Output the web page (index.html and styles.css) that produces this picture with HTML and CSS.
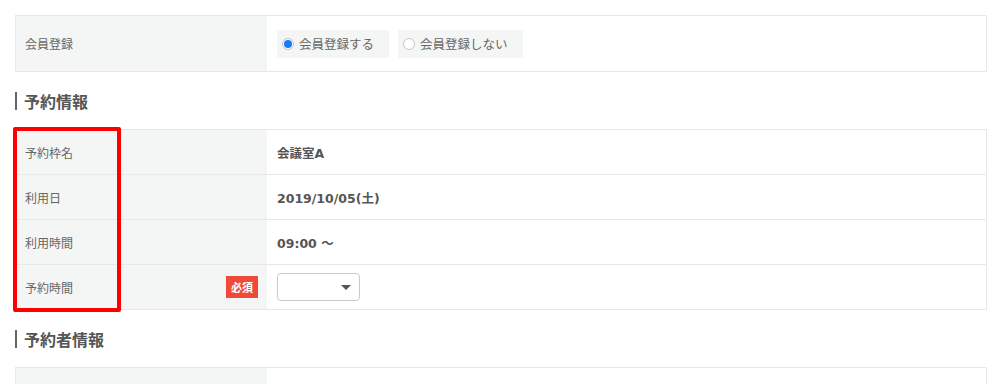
FILE: index.html
```html
<!DOCTYPE html>
<html lang="ja">
<head>
    <meta charset="UTF-8">
    <meta name="viewport" content="width=device-width, initial-scale=1.0">
    <title>予約フォーム</title>
    <link rel="stylesheet" href="styles.css">
</head>
<body>
    <div class="container">
        <div class="form-table">
            <div class="form-row tall">
                <div class="form-label">会員登録</div>
                <div class="form-value">
                    <label class="radio-pill">
                        <input type="radio" name="member" checked>
                        <span>会員登録する</span>
                    </label>
                    <label class="radio-pill">
                        <input type="radio" name="member">
                        <span>会員登録しない</span>
                    </label>
                </div>
            </div>
        </div>

        <h3 class="section-title">予約情報</h3>

        <div class="form-table">
            <div class="form-row">
                <div class="form-label">予約枠名</div>
                <div class="form-value strong">会議室A</div>
            </div>
            <div class="form-row">
                <div class="form-label">利用日</div>
                <div class="form-value strong">2019/10/05(土)</div>
            </div>
            <div class="form-row">
                <div class="form-label">利用時間</div>
                <div class="form-value strong">09:00 ～</div>
            </div>
            <div class="form-row">
                <div class="form-label">
                    予約時間
                    <span class="required">必須</span>
                </div>
                <div class="form-value">
                    <div class="select-box">
                        <select>
                            <option></option>
                        </select>
                        <span class="select-arrow"></span>
                    </div>
                </div>
            </div>
            <div class="highlight-box"></div>
        </div>

        <h3 class="section-title">予約者情報</h3>

        <div class="form-table">
            <div class="form-row">
                <div class="form-label">会員資格</div>
                <div class="form-value strong">ゲスト</div>
            </div>
        </div>
    </div>
</body>
</html>
```

FILE: styles.css
```css
body {
    margin: 0;
    background: #fff;
    font-family: "Noto Sans CJK JP", "Liberation Sans", sans-serif;
    color: #666;
}

.container {
    width: 972px;
    padding: 15px;
}

.form-table {
    position: relative;
    border: 1px solid #e8e8e8;
    border-bottom: none;
}

.form-row {
    display: grid;
    grid-template-columns: 251px 1fr;
    height: 44px;
    border-bottom: 1px solid #e8e8e8;
}

.form-row.tall {
    height: 55px;
}

.form-label {
    display: flex;
    align-items: center;
    justify-content: space-between;
    padding: 0 9px;
    background: #f4f5f5;
    font-size: 12px;
    color: #666;
}

.form-value {
    display: flex;
    align-items: center;
    gap: 9px;
    padding: 0 10px;
    font-size: 12px;
    color: #555;
}

.form-value.strong {
    font-family: "DejaVu Sans", "Noto Sans CJK JP", sans-serif;
    font-size: 12.5px;
    font-weight: bold;
}

.radio-pill {
    display: flex;
    align-items: center;
    gap: 5px;
    height: 28px;
    padding: 0 15px 0 5px;
    background: #f4f5f5;
    font-size: 12.5px;
    color: #666;
    cursor: pointer;
}

.radio-pill input {
    appearance: none;
    -webkit-appearance: none;
    width: 12px;
    height: 12px;
    margin: 0;
    border: 1px solid #c4c4c4;
    border-radius: 50%;
    background: #fff;
    position: relative;
}

.radio-pill input:checked::after {
    content: "";
    position: absolute;
    left: 1px;
    top: 1px;
    width: 8px;
    height: 8px;
    border-radius: 50%;
    background: #1a7cf2;
}

.section-title {
    margin: 20px 0 19px;
    padding-left: 7px;
    border-left: 2px solid #666;
    height: 18px;
    line-height: 18px;
    font-size: 16px;
    font-weight: bold;
    color: #555;
}

.required {
    display: inline-block;
    width: 32px;
    height: 22px;
    line-height: 22px;
    text-align: center;
    background: #ef4a37;
    color: #fff;
    font-size: 11px;
    font-weight: bold;
}

.select-box {
    position: relative;
    width: 83px;
    height: 28px;
}

.select-box select {
    appearance: none;
    -webkit-appearance: none;
    width: 100%;
    height: 100%;
    border: 1px solid #c8c8c8;
    border-radius: 4px;
    background: #fff;
}

.select-arrow {
    position: absolute;
    right: 9px;
    top: 12px;
    width: 0;
    height: 0;
    border-left: 5px solid transparent;
    border-right: 5px solid transparent;
    border-top: 5px solid #555;
}

.highlight-box {
    position: absolute;
    left: -3px;
    top: -3px;
    width: 100px;
    height: 177px;
    border: 4px solid #f00;
    border-radius: 2px;
    pointer-events: none;
}
```
